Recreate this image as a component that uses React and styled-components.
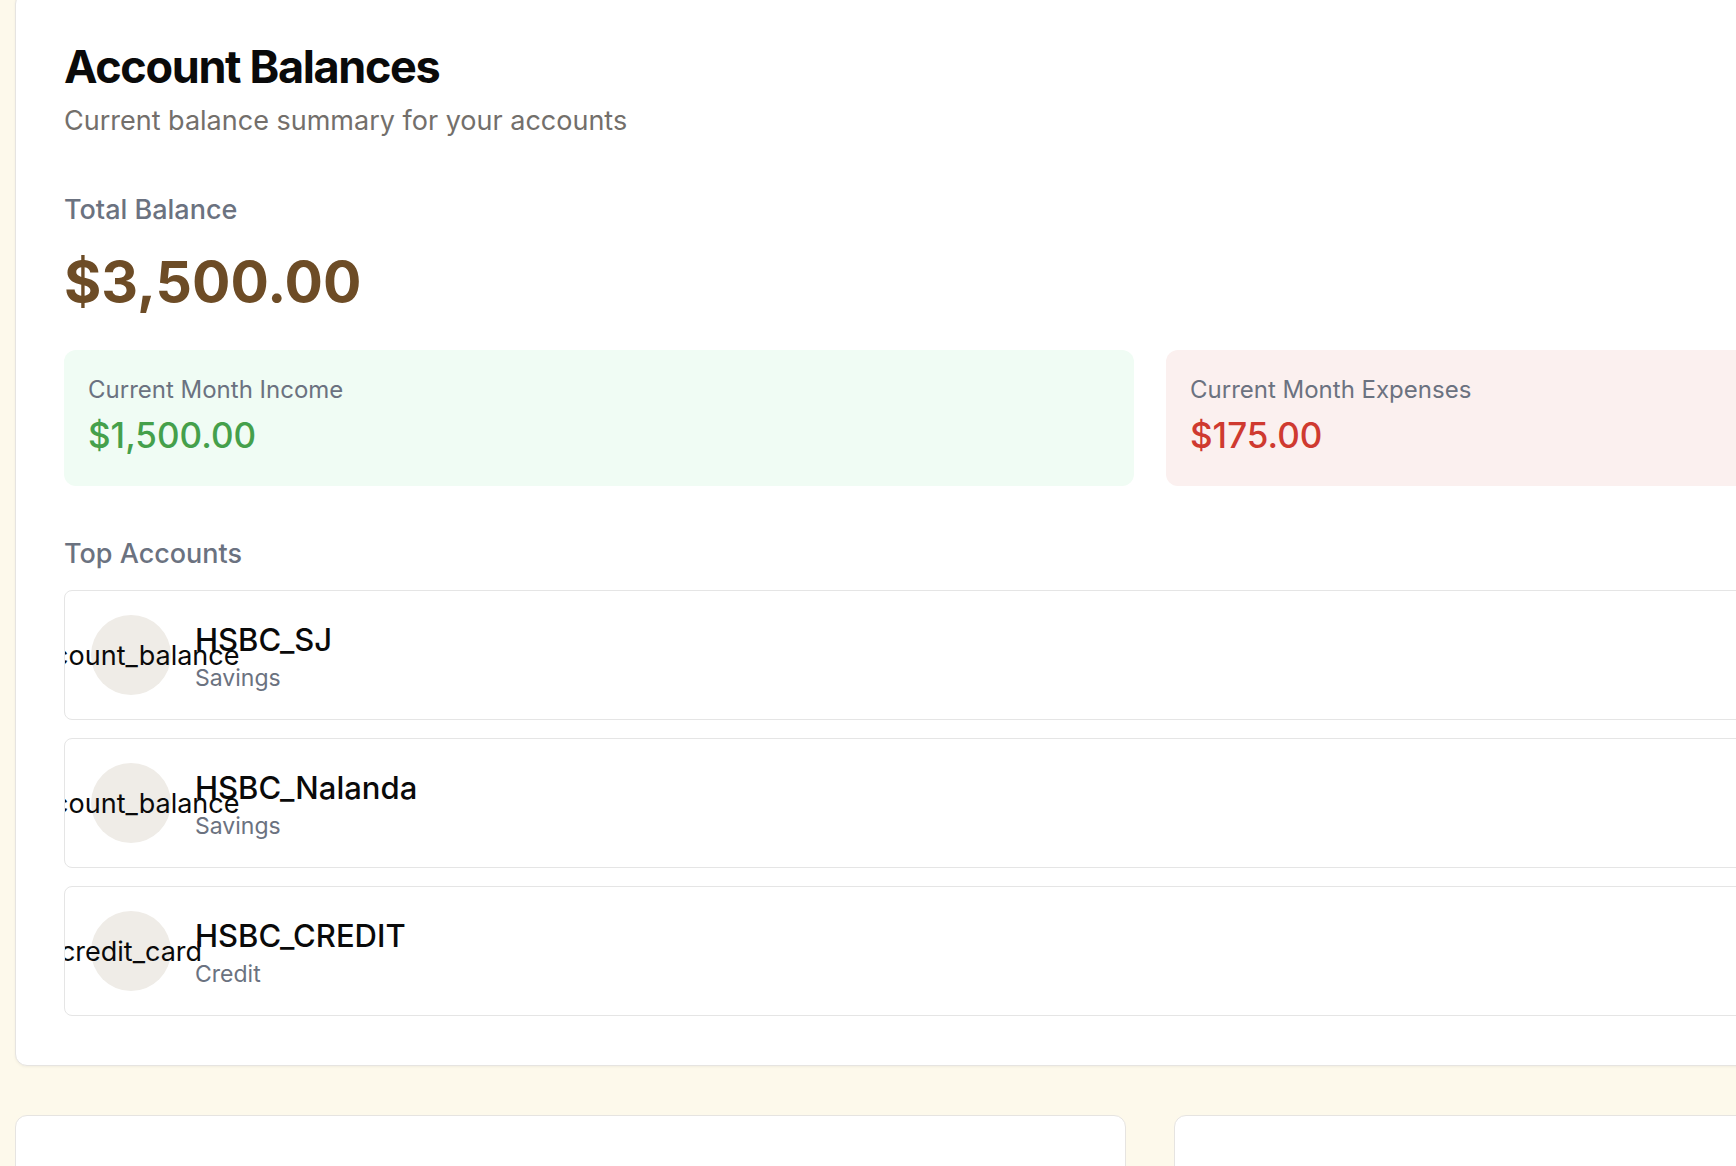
import styled, { createGlobalStyle } from "styled-components";

const GlobalStyle = createGlobalStyle`
    html, body {
        margin: 0;
        padding: 0;
        overflow: hidden;
        background: #fdf9eb;
        font-family: 'Inter', 'Noto Sans', sans-serif;
    }
    * {
        box-sizing: border-box;
    }
`;

const accounts = [
    { name: "HSBC_SJ", type: "Savings", icon: "account_balance" },
    { name: "HSBC_Nalanda", type: "Savings", icon: "account_balance" },
    { name: "HSBC_CREDIT", type: "Credit", icon: "credit_card" },
];

export default function App() {
    return (
        <Page>
            <GlobalStyle />
            <Stack>
                <Card>
                    <Title>Account Balances</Title>
                    <Subtitle>Current balance summary for your accounts</Subtitle>

                    <Label>Total Balance</Label>
                    <Balance>$3,500.00</Balance>

                    <Stats>
                        <Stat $tone="income">
                            <StatLabel>Current Month Income</StatLabel>
                            <StatValue $tone="income">$1,500.00</StatValue>
                        </Stat>
                        <Stat $tone="expense">
                            <StatLabel>Current Month Expenses</StatLabel>
                            <StatValue $tone="expense">$175.00</StatValue>
                        </Stat>
                    </Stats>

                    <Section>Top Accounts</Section>
                    <List>
                        {accounts.map((a) => (
                            <Row key={a.name}>
                                <IconCircle>
                                    <span>{a.icon}</span>
                                </IconCircle>
                                <Info>
                                    <Name>{a.name}</Name>
                                    <Type>{a.type}</Type>
                                </Info>
                            </Row>
                        ))}
                    </List>
                </Card>

                <Bottom>
                    <Panel />
                    <Panel />
                </Bottom>
            </Stack>
        </Page>
    );
}

const Page = styled.div`
    height: 100vh;
    overflow: hidden;
    background: #fdf9eb;
    padding-left: 15px;
`;

const Stack = styled.div`
    width: 2270px;
    margin-top: -8px;
    display: flex;
    flex-direction: column;
    gap: 49px;
`;

const Card = styled.div`
    background: #ffffff;
    border: 1px solid #e6e4e1;
    border-radius: 12px;
    box-shadow: 0 1px 3px rgba(0, 0, 0, 0.05);
    padding: 48px 48px 49px;
    display: flex;
    flex-direction: column;
`;

const Title = styled.h1`
    margin: 0;
    font-size: 45px;
    line-height: 52px;
    font-weight: 700;
    letter-spacing: -0.03em;
    color: #0a0a0a;
`;

const Subtitle = styled.p`
    margin: 10px 0 0;
    font-size: 27px;
    line-height: 36px;
    color: #736f6b;
`;

const Label = styled.div`
    margin-top: 55px;
    font-size: 27px;
    line-height: 32px;
    font-weight: 500;
    color: #6b7280;
`;

const Balance = styled.div`
    margin-top: 24px;
    font-size: 57px;
    line-height: 64px;
    font-weight: 700;
    color: #6d4c26;
`;

const Stats = styled.div`
    margin-top: 36px;
    display: grid;
    grid-template-columns: 1fr 1fr;
    gap: 32px;
`;

const Stat = styled.div`
    border-radius: 12px;
    padding: 24px 24px 26px;
    background: ${(p) => (p.$tone === "income" ? "#f0fcf4" : "#fbf0ef")};
`;

const StatLabel = styled.div`
    font-size: 24px;
    line-height: 32px;
    color: #6b7280;
`;

const StatValue = styled.div`
    margin-top: 4px;
    font-size: 35px;
    line-height: 50px;
    font-weight: 500;
    color: ${(p) => (p.$tone === "income" ? "#45a04b" : "#cf3a30")};
`;

const Section = styled.div`
    margin-top: 52px;
    font-size: 27px;
    line-height: 32px;
    font-weight: 500;
    color: #6b7280;
`;

const List = styled.div`
    margin-top: 20px;
    display: flex;
    flex-direction: column;
    gap: 18px;
`;

const Row = styled.div`
    display: flex;
    align-items: center;
    gap: 24px;
    padding: 24px 26px;
    border: 1px solid #e5e5e5;
    border-radius: 8px;
    overflow: hidden;
`;

const IconCircle = styled.div`
    flex-shrink: 0;
    width: 80px;
    height: 80px;
    border-radius: 50%;
    background: #efece7;
    display: flex;
    align-items: center;
    justify-content: center;
    font-size: 27px;
    color: #0a0a0a;
    white-space: nowrap;
`;

const Info = styled.div`
    display: flex;
    flex-direction: column;
    gap: 5px;
    padding-top: 5px;
`;

const Name = styled.div`
    font-size: 31px;
    line-height: 36px;
    font-weight: 500;
    color: #0a0a0a;
`;

const Type = styled.div`
    font-size: 23px;
    line-height: 30px;
    color: #6b7280;
`;

const Bottom = styled.div`
    display: grid;
    grid-template-columns: 1fr 1fr;
    gap: 48px;
`;

const Panel = styled.div`
    height: 420px;
    background: #ffffff;
    border: 1px solid #e6e4e1;
    border-radius: 12px;
`;
